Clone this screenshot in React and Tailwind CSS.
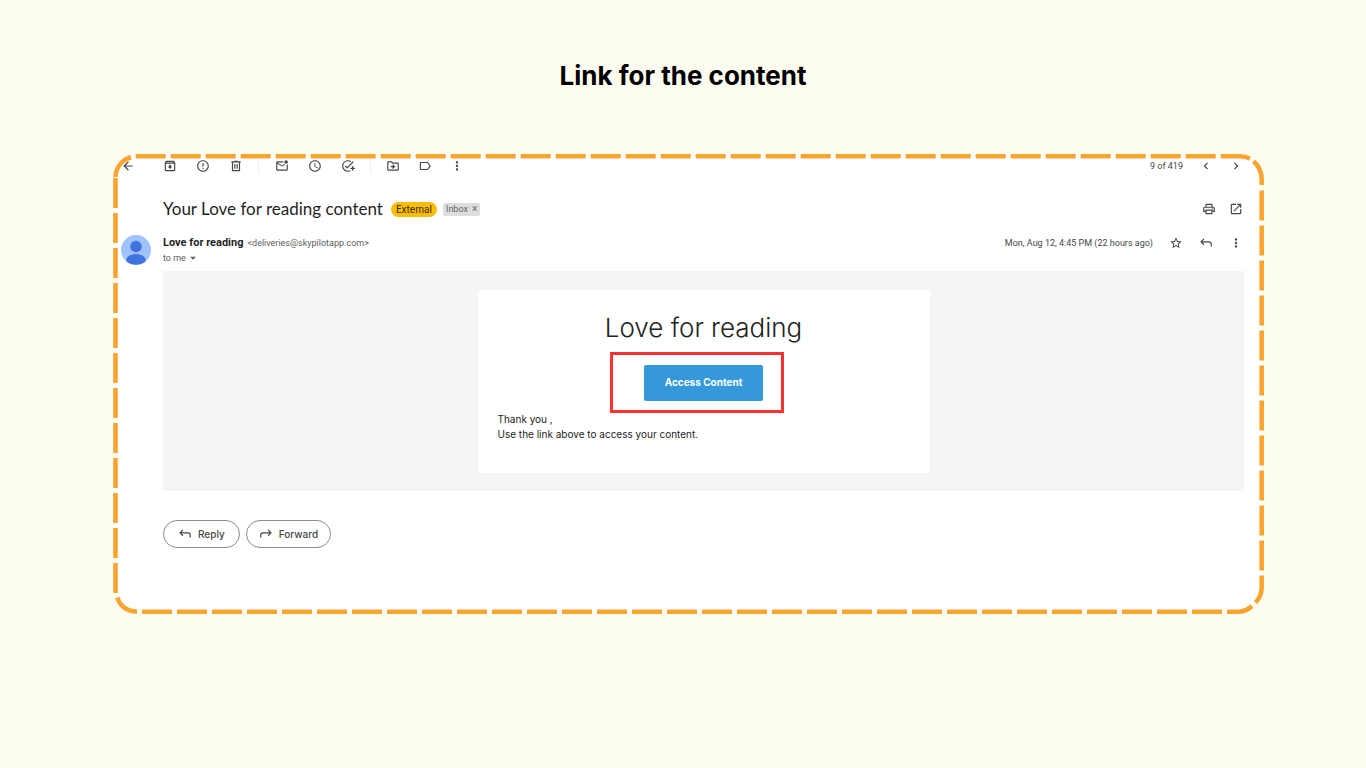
import {
  MdArrowBack,
  MdOutlineArchive,
  MdErrorOutline,
  MdOutlineMarkEmailUnread,
  MdAccessTime,
  MdOutlineAddTask,
  MdOutlineDriveFileMove,
  MdOutlineLabel,
  MdMoreVert,
  MdChevronLeft,
  MdChevronRight,
  MdOutlinePrint,
  MdOpenInNew,
  MdStarBorder,
  MdArrowDropDown,
} from "react-icons/md";

function IconButton({ label, children }) {
  return (
    <button type="button" aria-label={label} className="flex size-3.5 shrink-0 items-center justify-center text-[#444746]">
      {children}
    </button>
  );
}

function TrashIcon() {
  return (
    <svg viewBox="0 0 24 24" className="size-3.5" fill="none" stroke="currentColor" strokeWidth="2" aria-hidden="true">
      <path d="M4 5h16M9 4h6M6 5v15h12V5M10 8.500v8M14 8.500v8" />
    </svg>
  );
}

function ReplyIcon({ flipped }) {
  return (
    <svg
      viewBox="0 0 24 24"
      className={flipped ? "size-3.5 -scale-x-100" : "size-3.5"}
      fill="none"
      stroke="currentColor"
      strokeWidth="2"
      aria-hidden="true"
    >
      <path d="M8.500 5 3.500 10l5 5M3.500 10H17c2.200 0 4 1.800 4 4v4" />
    </svg>
  );
}

function DashedFrame() {
  return (
    <svg
      viewBox="0 0 1151 460"
      preserveAspectRatio="none"
      className="pointer-events-none absolute inset-0 size-full"
      fill="none"
      stroke="#fca430"
      strokeWidth="4.600"
      aria-hidden="true"
    >
      <path d="M22.700 2.300H1107" strokeDasharray="30 5" />
      <path d="M1107.700 2.300H1127Q1132.500 2.300 1137 4.700" />
      <path d="M1140.500 7.200Q1148.700 14 1148.700 26V31" />
      <path d="M1148.700 36.500V420" strokeDasharray="30 5" />
      <path d="M1148.700 421.500V433Q1148.700 442 1142.500 448.800" />
      <path d="M1139 452Q1133 457.700 1125 457.700H1114" />
      <path d="M29 457.700H1109" strokeDasharray="30 5" />
      <path d="M2.500 24V440" strokeDasharray="30 5" />
      <path d="M4.200 443.500Q9 457 24 457.700" />
      <path d="M2.500 23C3 13 9 6 18 3.300" />
    </svg>
  );
}

function Toolbar() {
  const icon = "size-3.5";
  return (
    <div className="flex h-3.5 items-center pr-[1px]">
      <IconButton label="Back"><MdArrowBack className={icon} /></IconButton>
      <div className="ml-7 flex items-center gap-[19px]">
        <IconButton label="Archive"><MdOutlineArchive className={icon} /></IconButton>
        <IconButton label="Report spam"><MdErrorOutline className={icon} /></IconButton>
        <IconButton label="Delete"><TrashIcon /></IconButton>
      </div>
      <span className="mr-4 ml-[15px] h-3.5 w-px bg-[#eeeeee]" />
      <div className="flex items-center gap-[19px]">
        <IconButton label="Mark as unread"><MdOutlineMarkEmailUnread className={icon} /></IconButton>
        <IconButton label="Snooze"><MdAccessTime className={icon} /></IconButton>
        <IconButton label="Add to tasks"><MdOutlineAddTask className={icon} /></IconButton>
      </div>
      <span className="mx-[15px] h-3.5 w-px bg-[#eeeeee]" />
      <div className="flex items-center gap-[18px]">
        <IconButton label="Move to"><MdOutlineDriveFileMove className={icon} /></IconButton>
        <IconButton label="Labels"><MdOutlineLabel className={icon} /></IconButton>
        <IconButton label="More"><MdMoreVert className={icon} /></IconButton>
      </div>
      <div className="ml-auto flex items-center gap-4">
        <span className="text-[9px] leading-4 text-[#444746]">9 of 419</span>
        <IconButton label="Newer"><MdChevronLeft className={icon} /></IconButton>
        <IconButton label="Older"><MdChevronRight className={icon} /></IconButton>
      </div>
    </div>
  );
}

function SubjectRow() {
  return (
    <div className="mt-6 flex h-6 items-center pl-[42px] pr-[1px]">
      <h2 className="font-['Lato',sans-serif] text-[17px] leading-6 text-[#1f1f1f]">Your Love for reading content</h2>
      <span className="ml-2 flex h-[15px] items-center rounded-full bg-[#fbbc04] px-[5px] text-[10px] leading-[15px] text-[#3c2e00]">External</span>
      <span className="ml-1.5 flex h-[13px] items-center gap-1 rounded-xs bg-[#dddddd] px-[3px] text-[9px] leading-[14px] text-[#666666]">
        Inbox
        <button type="button" aria-label="Remove Inbox label" className="text-[10px] leading-[14px]">×</button>
      </span>
      <div className="ml-auto flex items-center gap-[13px]">
        <IconButton label="Print"><MdOutlinePrint className="size-3.5" /></IconButton>
        <IconButton label="Open in new window"><MdOpenInNew className="size-3.5" /></IconButton>
      </div>
    </div>
  );
}

function SenderRow() {
  return (
    <div className="mt-3.5 flex pr-[1px]">
      <svg viewBox="0 0 30 30" className="size-[30px] shrink-0" aria-hidden="true">
        <circle cx="15" cy="15" r="15" fill="#a0c3ff" />
        <circle cx="15" cy="11.500" r="5.800" fill="#3f73df" />
        <path d="M5.300 26.300v-1c0-4 4.300-6 9.700-6s9.700 2 9.700 6v1a15 15 0 0 1-19.400 0z" fill="#3f73df" />
      </svg>
      <div className="ml-3 text-[#5e5e5e]">
        <p className="flex h-[15px] items-center gap-1 whitespace-nowrap leading-4">
          <span className="text-[11px] font-bold text-[#1f1f1f]">Love for reading</span>
          <span className="text-[9px]">&lt;deliveries@skypilotapp.com&gt;</span>
        </p>
        <button type="button" className="flex h-[15px] items-center text-[9px] leading-4">
          to me
          <MdArrowDropDown className="size-3.5" />
        </button>
      </div>
      <div className="ml-auto flex h-4 items-center gap-4">
        <time className="text-[9px] leading-4 text-[#444746]">Mon, Aug 12, 4:45 PM (22 hours ago)</time>
        <IconButton label="Star"><MdStarBorder className="size-3.5" /></IconButton>
        <IconButton label="Reply"><ReplyIcon /></IconButton>
        <IconButton label="More options"><MdMoreVert className="size-3.5" /></IconButton>
      </div>
    </div>
  );
}

function Message() {
  return (
    <div className="ml-[42px] mt-1.5 bg-[#f5f5f5] px-4 pt-[19px] pb-[18px]">
      <div className="mx-auto max-w-[452px] rounded-xs bg-white px-5 pt-5 pb-[31px]">
        <h3 className="text-center font-['Inter',sans-serif] text-[26px] leading-9 font-light text-[#222222]">Love for reading</h3>
        <div className="relative mx-auto mt-[19px] w-[119px]">
          <a
            href="#content"
            className="flex h-9 items-center justify-center rounded-xs bg-[#3498db] pb-0.5 font-['Inter',sans-serif] text-[10px] font-bold text-white"
          >
            Access Content
          </a>
          <span className="pointer-events-none absolute -top-[13px] -right-[21px] -bottom-3 -left-[34px] border-[3px] border-[#ff3131]" />
        </div>
        <p className="mt-[11px] font-['Inter',sans-serif] text-[10px] leading-[15px] text-[#222222]">
          Thank you ,<br />
          Use the link above to access your content.
        </p>
      </div>
    </div>
  );
}

export default function App() {
  const pill =
    "flex h-7 items-center gap-1.5 rounded-full border border-[#8a8c8b] font-['Inter',sans-serif] text-[10px] font-medium text-[#444746]";
  return (
    <main className="min-h-screen bg-[#fcfcf0] pt-[58px] pr-[102px] pb-12 pl-[113px] font-['Roboto',sans-serif]">
      <h1 className="pr-[11px] text-center font-['Inter',sans-serif] text-[26px] leading-9 font-bold text-black">Link for the content</h1>
      <section className="relative mt-[60px]">
        <div className="absolute inset-[2px] rounded-[24px] bg-white" />
        <div className="relative pt-[5px] pr-5 pb-[66px] pl-2">
          <Toolbar />
          <SubjectRow />
          <SenderRow />
          <Message />
          <div className="mt-[29px] ml-[42px] flex gap-1.5">
            <button type="button" className={`${pill} px-3.5`}>
              <ReplyIcon />
              Reply
            </button>
            <button type="button" className={`${pill} px-3`}>
              <ReplyIcon flipped />
              Forward
            </button>
          </div>
        </div>
        <DashedFrame />
      </section>
    </main>
  );
}
